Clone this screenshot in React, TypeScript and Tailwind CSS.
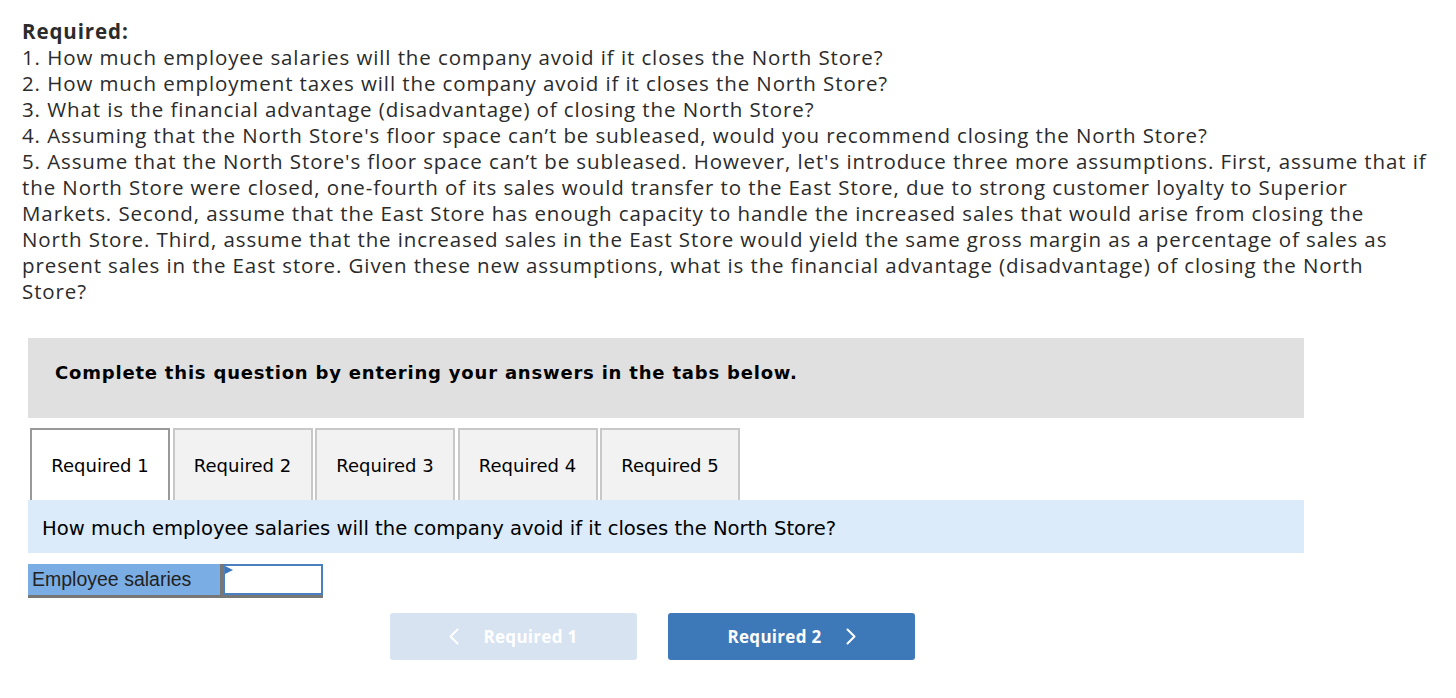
import React from 'react';

const tabs = ['Required 1', 'Required 2', 'Required 3', 'Required 4', 'Required 5'];

const Chevron: React.FC<{ dir: 'left' | 'right' }> = ({ dir }) => (
    <svg width="10" height="17" viewBox="0 0 10 17" fill="none" stroke="currentColor" strokeWidth="2" strokeLinecap="round" strokeLinejoin="round">
        {dir === 'left' ? <polyline points="8.5,1.5 1.5,8.5 8.5,15.5" /> : <polyline points="1.5,1.5 8.5,8.5 1.5,15.5" />}
    </svg>
);

const App: React.FC = () => (
    <div className="bg-white min-h-screen text-[#2b2b2b] pt-[18px]">
        {/* Question text */}
        <div className="pl-[22px] text-[20.5px] leading-[26px] tracking-[0.9px] font-['Open_Sans',sans-serif]">
            <p className="font-bold">Required:</p>
            <p>1. How much employee salaries will the company avoid if it closes the North Store?</p>
            <p>2. How much employment taxes will the company avoid if it closes the North Store?</p>
            <p>3. What is the financial advantage (disadvantage) of closing the North Store?</p>
            <p>4. Assuming that the North Store's floor space can’t be subleased, would you recommend closing the North Store?</p>
            <p className="whitespace-nowrap">
                5. Assume that the North Store's floor space can’t be subleased. However, let's introduce three more assumptions. First, assume that if
                <br />
                the North Store were closed, one-fourth of its sales would transfer to the East Store, due to strong customer loyalty to Superior
                <br />
                Markets. Second, assume that the East Store has enough capacity to handle the increased sales that would arise from closing the
                <br />
                North Store. Third, assume that the increased sales in the East Store would yield the same gross margin as a percentage of sales as
                <br />
                present sales in the East store. Given these new assumptions, what is the financial advantage (disadvantage) of closing the North
                <br />
                Store?
            </p>
        </div>

        {/* Answer area */}
        <div className="ml-[28px] w-[1276px] mt-[34px] font-['DejaVu_Sans','Verdana',sans-serif] text-black">
            <div className="bg-[#e0e0e0] h-[80px] pl-[27px] pt-[21px] text-[18px] tracking-[0.8px] font-bold">
                Complete this question by entering your answers in the tabs below.
            </div>

            <div className="flex gap-[2.5px] mt-[10px] pl-[2px]">
                {tabs.map((t, i) => (
                    <div
                        key={t}
                        className={
                            i === 0
                                ? 'w-[140px] h-[72px] border-2 border-b-0 border-[#999] bg-white flex items-center justify-center text-[18px]'
                                : 'w-[140px] h-[72px] border-2 border-b-0 border-[#c8c8c8] bg-[#f2f2f2] flex items-center justify-center text-[18px]'
                        }
                    >
                        {t}
                    </div>
                ))}
            </div>

            <div className="bg-[#dbebf9] h-[53px] pl-[14px] pt-[5px] flex items-center text-[19.6px]">
                How much employee salaries will the company avoid if it closes the North Store?
            </div>

            <div className="flex mt-[11px]">
                <div className="flex border-b-[3px] border-[#777]">
                    <div className="w-[192px] h-[31px] bg-[#7aade3] pl-[4px] flex items-center text-[19.5px] text-[#222] font-['Liberation_Sans',Arial,sans-serif]">
                        Employee salaries
                    </div>
                    <div className="w-[3px] bg-[#777]" />
                    <div className="relative w-[100px] h-[31px] bg-white border-2 border-[#4a7fc0]">
                        <svg className="absolute left-0 top-0" width="8" height="10" viewBox="0 0 8 10">
                            <polygon points="0,0 8,4 0,8" fill="#3b76bd" />
                        </svg>
                    </div>
                </div>
            </div>

            <div className="flex gap-[31px] mt-[15px] ml-[362px] font-['Open_Sans',sans-serif] font-bold text-[17px] tracking-[0.3px] text-white">
                <div className="w-[247px] h-[47px] rounded-[3px] bg-[#d7e3f1] flex items-center justify-center gap-[24px]">
                    <Chevron dir="left" />
                    <span>Required 1</span>
                </div>
                <div className="w-[247px] h-[47px] rounded-[3px] bg-[#3d78b8] flex items-center justify-center gap-[24px]">
                    <span>Required 2</span>
                    <Chevron dir="right" />
                </div>
            </div>
        </div>
    </div>
);

export default App;
